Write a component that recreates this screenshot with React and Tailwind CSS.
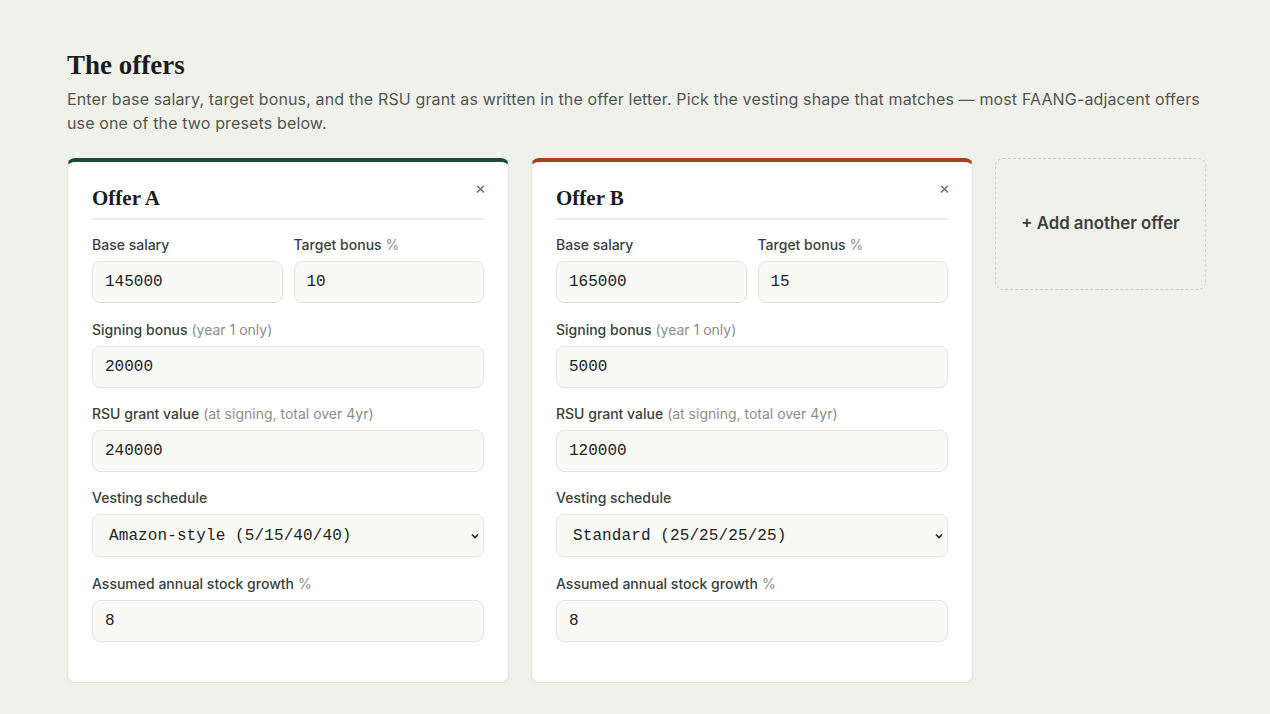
import React from 'react';

const offers = [
  {
    name: 'Offer A',
    accent: 'border-t-[#1d4b38]',
    base: '145000',
    bonus: '10',
    signing: '20000',
    rsu: '240000',
    vesting: 'Amazon-style (5/15/40/40)',
    growth: '8',
  },
  {
    name: 'Offer B',
    accent: 'border-t-[#a3431d]',
    base: '165000',
    bonus: '15',
    signing: '5000',
    rsu: '120000',
    vesting: 'Standard (25/25/25/25)',
    growth: '8',
  },
];

const vestingOptions = ['Standard (25/25/25/25)', 'Amazon-style (5/15/40/40)'];

function Label({ children, hint }) {
  return (
    <label className="block text-[14px] leading-5 font-medium text-[#3b403d] mb-[6px]">
      {children}
      {hint && <span className="font-normal text-[#8a8f8b]"> {hint}</span>}
    </label>
  );
}

function Field({ value }) {
  return (
    <input
      type="text"
      defaultValue={value}
      className="w-full h-[42px] rounded-lg border border-[#e4e4de] bg-[#f9f9f6] px-3 text-[16px] text-[#222] font-['Liberation_Mono',monospace] outline-none"
    />
  );
}

function OfferCard({ offer }) {
  return (
    <div className={`bg-white rounded-lg border border-[#e2e2dc] border-t-4 ${offer.accent} px-6 pt-[18px] pb-[40px]`}>
      <div className="flex items-start justify-between border-b-2 border-[#ececE8] pb-[4px]">
        <h3 className="font-['Liberation_Serif',serif] font-bold text-[21px] leading-8 text-[#1b1d1c] mt-[2px]">
          {offer.name}
        </h3>
        <button className="text-[#6b6f6c] text-[17px] leading-none mt-0 -mr-[2px]">×</button>
      </div>

      <div className="grid grid-cols-2 gap-x-[11px] mt-[15px]">
        <div>
          <Label>Base salary</Label>
          <Field value={offer.base} />
        </div>
        <div>
          <Label hint="%">Target bonus</Label>
          <Field value={offer.bonus} />
        </div>
      </div>

      <div className="mt-[17px]">
        <Label hint="(year 1 only)">Signing bonus</Label>
        <Field value={offer.signing} />
      </div>

      <div className="mt-[16px]">
        <Label hint="(at signing, total over 4yr)">RSU grant value</Label>
        <Field value={offer.rsu} />
      </div>

      <div className="mt-[16px]">
        <Label>Vesting schedule</Label>
        <div className="relative">
          <select
            defaultValue={offer.vesting}
            className="appearance-none w-full h-[43px] rounded-lg border border-[#e4e4de] bg-[#f9f9f6] pl-4 pr-8 text-[16px] tracking-[0.1px] text-[#222] font-['Liberation_Mono',monospace] outline-none"
          >
            {vestingOptions.map((o) => (
              <option key={o}>{o}</option>
            ))}
          </select>
          <svg
            className="absolute right-[4px] top-1/2 -translate-y-1/2 pointer-events-none"
            width="10"
            height="10"
            viewBox="0 0 10 10"
            fill="none"
            stroke="#222"
            strokeWidth="1.6"
          >
            <path d="M2 3.5 L5 6.5 L8 3.5" />
          </svg>
        </div>
      </div>

      <div className="mt-[17px]">
        <Label hint="%">Assumed annual stock growth</Label>
        <Field value={offer.growth} />
      </div>
    </div>
  );
}

export default function App() {
  return (
    <div className="min-h-screen bg-[#f1f1ec] font-['Inter',sans-serif] px-[67px] pt-[49px] pb-8">
      <h2 className="font-['Liberation_Serif',serif] font-bold text-[27px] leading-8 text-[#1b1d1c]">
        The offers
      </h2>
      <p className="mt-[6px] text-[16px] tracking-[0.14px] leading-6 text-[#4f5652] max-w-[1140px]">
        Enter base salary, target bonus, and the RSU grant as written in the offer letter. Pick the vesting shape that
        matches — most FAANG-adjacent offers use one of the two presets below.
      </p>

      <div className="mt-[23px] grid grid-cols-[442px_442px_211px] gap-[22px] items-start">
        {offers.map((o) => (
          <OfferCard key={o.name} offer={o} />
        ))}
        <button className="h-[132px] rounded-lg border border-dashed border-[#cfd3cd] text-[16.8px] font-semibold text-[#3b423e]">
          + Add another offer
        </button>
      </div>
    </div>
  );
}
